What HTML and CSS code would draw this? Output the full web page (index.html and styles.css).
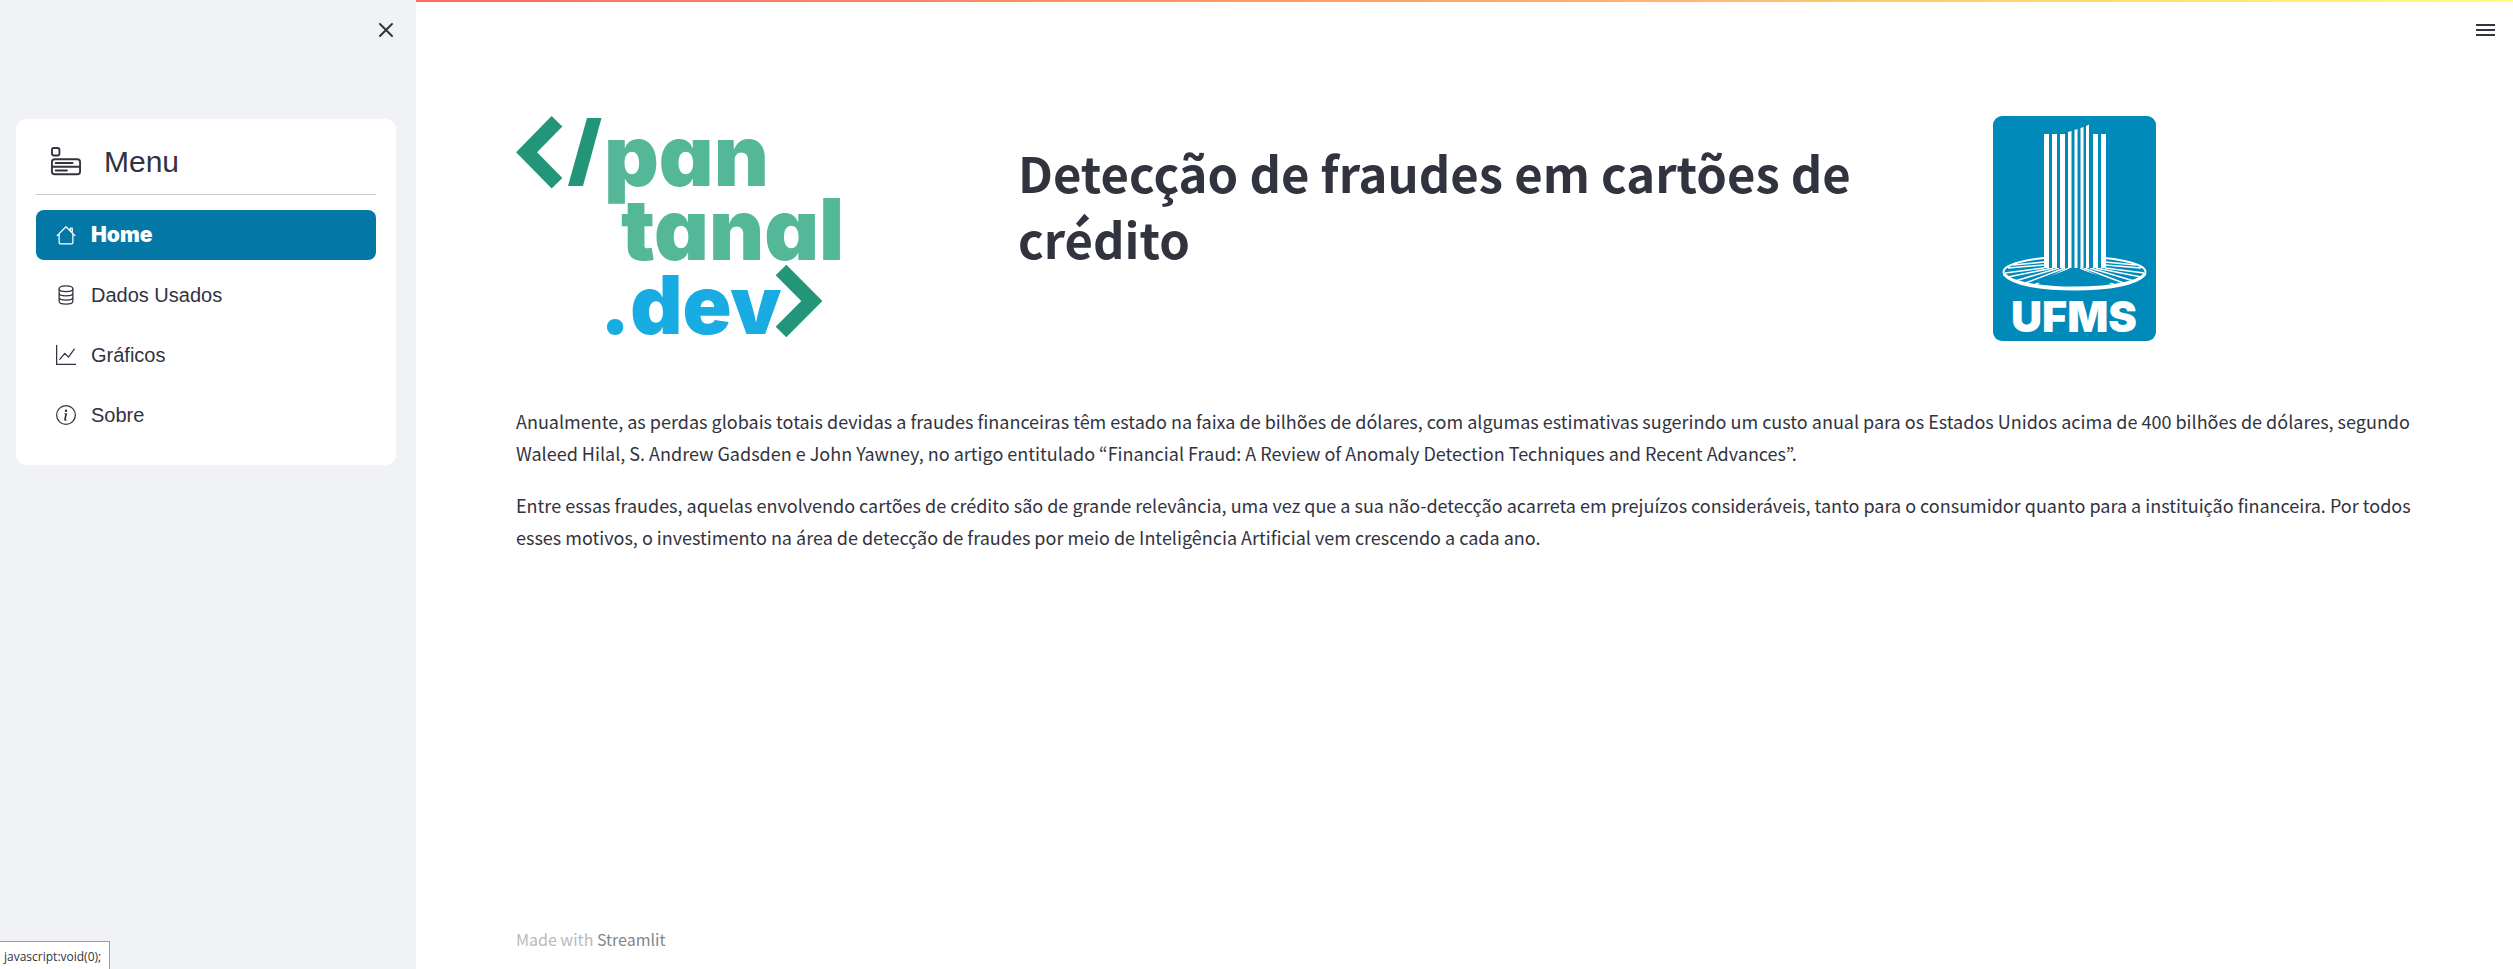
FILE: index.html
```html
<!DOCTYPE html>
<html lang="pt-BR">
<head>
<meta charset="utf-8">
<title>Detecção de fraudes em cartões de crédito</title>
<meta name="viewport" content="width=device-width, initial-scale=1">
<link rel="stylesheet" href="styles.css">
</head>
<body>
<div class="app">
  <aside class="sidebar">
    <div class="sidebar-top">
      <button class="icon-button" type="button" aria-label="Fechar menu">
        <svg class="icon" viewBox="0 0 20 20" fill="none" stroke="currentColor" stroke-width="2" stroke-linecap="round"><path d="M4 4l12 12M16 4L4 16"/></svg>
      </button>
    </div>
    <nav class="menu" aria-label="Menu">
      <h2 class="menu-title">
        <svg class="menu-icon" viewBox="0 0 16 16" fill="currentColor"><path d="M0 1.500A1.500 1.500 0 0 1 1.500 0h2A1.500 1.500 0 0 1 5 1.500v2A1.500 1.500 0 0 1 3.500 5h-2A1.500 1.500 0 0 1 0 3.500v-2zM1.500 1a.5.5 0 0 0-.5.5v2a.5.5 0 0 0 .5.5h2a.5.5 0 0 0 .5-.5v-2a.5.5 0 0 0-.5-.5h-2zM0 8a2 2 0 0 1 2-2h12a2 2 0 0 1 2 2v5a2 2 0 0 1-2 2H2a2 2 0 0 1-2-2V8zm1 3v2a1 1 0 0 0 1 1h12a1 1 0 0 0 1-1v-2H1zm14-1V8a1 1 0 0 0-1-1H2a1 1 0 0 0-1 1v2h14zM2 8.500a.5.5 0 0 1 .5-.5h9a.5.5 0 0 1 0 1h-9a.5.5 0 0 1-.5-.5zm0 4a.5.5 0 0 1 .5-.5h6a.5.5 0 0 1 0 1h-6a.5.5 0 0 1-.5-.5z"/></svg>
        Menu
      </h2>
      <ul class="menu-list">
        <li><a class="menu-link active" href="#home" aria-current="page">
          <svg class="icon" viewBox="0 0 16 16" fill="none" stroke="currentColor" stroke-linecap="round" stroke-linejoin="round"><path d="M.9 8.500L8 1.400 15.100 8.500M2.500 7.300V14a1 1 0 0 0 1 1h9a1 1 0 0 0 1-1V7.300M11.500 4.500V2.500h1.500V6"/></svg>
          Home</a></li>
        <li><a class="menu-link" href="#dados">
          <svg class="icon" viewBox="0 0 16 16" fill="none" stroke="currentColor"><ellipse cx="8" cy="3" rx="5.500" ry="2.300"/><path d="M2.500 3v10c0 1.300 2.500 2.300 5.500 2.300s5.500-1 5.500-2.300V3M2.500 6.300c0 1.300 2.500 2.300 5.500 2.300s5.500-1 5.500-2.300M2.500 9.700c0 1.300 2.500 2.300 5.500 2.300s5.500-1 5.500-2.300"/></svg>
          Dados Usados</a></li>
        <li><a class="menu-link" href="#graficos">
          <svg class="icon" viewBox="0 0 16 16" fill="none" stroke="currentColor" stroke-linejoin="round"><path d="M.5 0v15.500H16" stroke-linejoin="miter"/><path d="M3 11.500L7 6.700l3 3L14.600 3.300" stroke-linecap="round"/></svg>
          Gráficos</a></li>
        <li><a class="menu-link" href="#sobre">
          <svg class="icon" viewBox="0 0 16 16" fill="currentColor"><path d="M8 15A7 7 0 1 1 8 1a7 7 0 0 1 0 14zm0 1A8 8 0 1 0 8 0a8 8 0 0 0 0 16z"/><path d="m8.930 6.588-2.290.287-.082.380.450.083c.294.070.352.176.288.469l-.738 3.468c-.194.897.105 1.319.808 1.319.545 0 1.178-.252 1.465-.598l.088-.416c-.2.176-.492.246-.686.246-.275 0-.375-.193-.304-.533L8.930 6.588zM9 4.500a1 1 0 1 1-2 0 1 1 0 0 1 2 0z"/></svg>
          Sobre</a></li>
      </ul>
    </nav>
    <div class="status">javascript:void(0);</div>
  </aside>

  <div class="page">
    <header class="toolbar">
      <button class="icon-button" type="button" aria-label="Abrir opções">
        <svg class="icon" viewBox="0 0 20 20" fill="none" stroke="currentColor" stroke-width="2"><path d="M1 5h19M1 10h19M1 15h19"/></svg>
      </button>
    </header>
    <main class="content">
      <div class="banner">
        <svg class="logo-pantanal" viewBox="0 0 325 221" role="img" aria-label="pantanal.dev">
          <g fill="none" stroke="#23967a" stroke-width="15">
            <path d="M41 5.300L10.600 36.300 41 67.300"/>
            <path d="M265 154L295.800 185 265 216"/>
          </g>
          <path d="M71 2h14.500L67 70H52z" fill="#23967a"/>
          <g class="logo-word">
            <text x="88" y="70" fill="#53b798">pan</text>
            <text x="105" y="144" fill="#53b798">tanal</text>
            <text class="logo-suffix" x="84" y="218" fill="#19ace2">.dev</text>
          </g>
        </svg>
        <h1 class="title">Detecção de fraudes em cartões de crédito</h1>
        <svg class="logo-ufms" viewBox="0 0 163 225" role="img" aria-label="UFMS">
          <rect width="163" height="225" rx="9" fill="#008ab9"/>
          <g fill="none" stroke="#fff">
            <ellipse cx="81.500" cy="156" rx="71" ry="15.500" stroke-width="2"/>
            <path d="M11 158c8 10 36 15 70.500 15s62.500-5 70.500-15" stroke-width="3"/>
            <path d="M51 146L20 149M51 149L15 152M51 152L12 157M60 152L15 161M66 152L22 165M72 152L30 168M76 152L39 170M112 146l31 3M112 149l36 3M112 152l39 5M103 152l45 9M97 152l44 13M91 152l42 16M87 152l37 18" stroke-width="1.500"/>
          </g>
          <path d="M76 153h11l36 13q-41 8-82 0z" fill="#008ab9"/>
          <path d="M51 138h62v14H51z" fill="#008ab9"/>
          <path fill="#fff" d="M51 18h5v134h-5zM59 18h5v134h-5zM67 18h5v134h-5zM75 16l3.500-1v137H75zM81.500 14l3-1v139h-3zM87.500 12l3-1v141h-3zM93 10l3-1.500V152h-3zM100 18h5v134h-5zM108 18h5v134h-5z"/>
          <text class="ufms-word" x="81" y="216" text-anchor="middle" fill="#fff">UFMS</text>
        </svg>
      </div>
      <p>Anualmente, as perdas globais totais devidas a fraudes financeiras têm estado na faixa de bilhões de dólares, com algumas estimativas sugerindo um custo anual para os Estados Unidos acima de 400 bilhões de dólares, segundo Waleed Hilal, S. Andrew Gadsden e John Yawney, no artigo entitulado “Financial Fraud: A Review of Anomaly Detection Techniques and Recent Advances”.</p>
      <p>Entre essas fraudes, aquelas envolvendo cartões de crédito são de grande relevância, uma vez que a sua não-detecção acarreta em prejuízos consideráveis, tanto para o consumidor quanto para a instituição financeira. Por todos esses motivos, o investimento na área de detecção de fraudes por meio de Inteligência Artificial vem crescendo a cada ano.</p>
    </main>
    <footer class="footer">Made with <a href="#streamlit">Streamlit</a></footer>
  </div>
</div>
</body>
</html>
```
FILE: styles.css
```css
* { box-sizing: border-box; }

body {
  margin: 0;
  color: #31333f;
  background: #fff;
  font-family: "Noto Sans CJK KR", "Noto Sans", sans-serif;
  font-size: 18px;
  line-height: 32px;
}

.app { display: flex; min-height: 100vh; }

.sidebar {
  position: relative;
  flex: 0 0 416px;
  padding: 0 20px 0 16px;
  background: #f0f2f6;
}

.sidebar-top {
  display: flex;
  justify-content: flex-end;
  height: 119px;
  padding-top: 20px;
}

.icon-button {
  display: block;
  width: 20px;
  height: 20px;
  padding: 0;
  border: 0;
  color: inherit;
  background: none;
  cursor: pointer;
}

.icon { display: block; flex: none; width: 20px; height: 20px; }

.menu {
  padding: 20px 20px 25px;
  border-radius: 10px;
  background: #fff;
  font-family: "Liberation Sans", Arial, sans-serif;
}

.menu-title {
  display: flex;
  align-items: center;
  gap: 23px;
  margin: 0 0 15px;
  padding: 0 15px 10px;
  border-bottom: 1px solid #c9c9cb;
  font-size: 30px;
  font-weight: 400;
  line-height: 45px;
}

.menu-icon { width: 30px; height: 30px; }

.menu-list {
  display: grid;
  gap: 10px;
  margin: 0;
  padding: 0;
  list-style: none;
}

.menu-link {
  display: flex;
  align-items: center;
  gap: 15px;
  height: 50px;
  padding: 0 20px;
  border-radius: 8px;
  color: inherit;
  font-size: 20px;
  text-decoration: none;
}

.menu-link.active {
  color: #fff;
  background: #0378a6;
  font-family: Inter, "Liberation Sans", sans-serif;
  font-size: 21px;
  font-weight: 900;
}

.status {
  position: absolute;
  bottom: 0;
  left: 0;
  padding: 3px 8px 1px 4px;
  border: 1px solid #9b9ea3;
  border-width: 1px 1px 0 0;
  background: #fff;
  font-family: "Open Sans", sans-serif;
  font-size: 12px;
  line-height: 23px;
}

.page {
  display: flex;
  flex: 1;
  flex-direction: column;
  min-width: 0;
}

.toolbar {
  display: flex;
  justify-content: flex-end;
  height: 116px;
  padding: 20px 18px 0;
  background: linear-gradient(90deg, #ff6b5c, #ffa666 50%, #fffd80) top / 100% 2px no-repeat;
}

.content { flex: 1; padding: 0 100px; }
.content p { margin: 0 0 20px; }

.banner {
  display: grid;
  grid-template-columns: 482fr 955fr 420fr;
  gap: 20px;
  align-items: start;
  margin-bottom: 64px;
}

.logo-pantanal { display: block; width: 325px; overflow: visible; }
.logo-word {
  font-family: Inter, sans-serif;
  font-size: 85px;
  font-weight: 900;
  font-feature-settings: "cv11";
}
.logo-suffix { font-size: 81px; }
.logo-ufms { display: block; width: 163px; }
.ufms-word { font-family: Inter, sans-serif; font-size: 43px; font-weight: 900; }

.title {
  margin: 0;
  padding: 23px 0;
  font-size: 49px;
  font-weight: 700;
  line-height: 66px;
}

.footer {
  padding: 0 100px 14px;
  color: #b8b9be;
  font-size: 16px;
}
.footer a { color: #83858c; text-decoration: none; }
```
